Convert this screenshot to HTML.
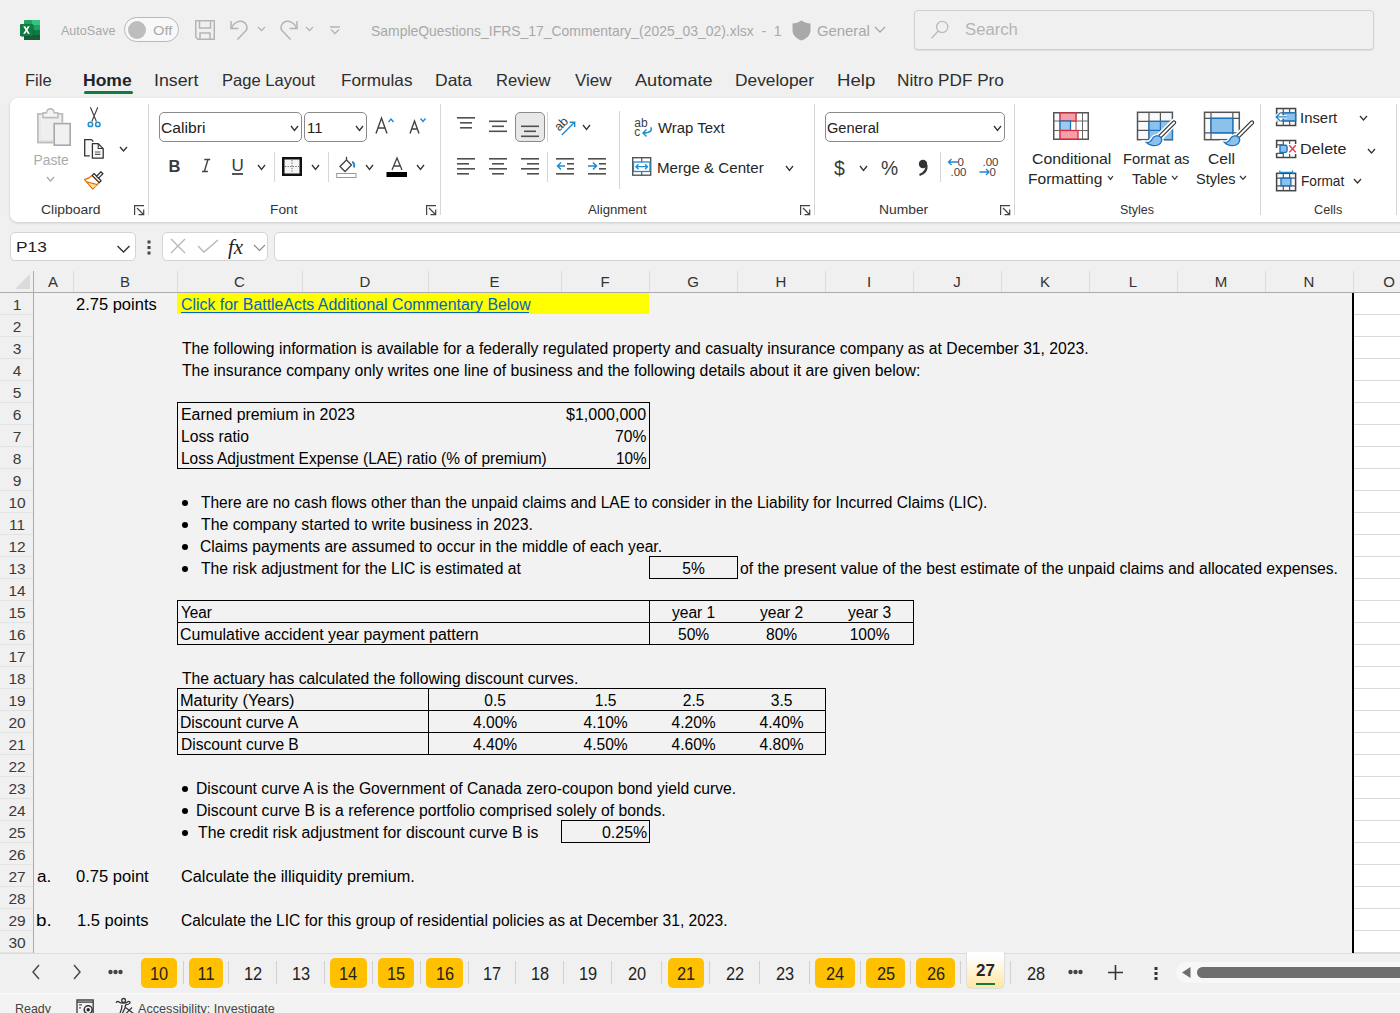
<!DOCTYPE html><html><head><meta charset="utf-8"><style>
html,body{margin:0;padding:0;}
body{width:1400px;height:1013px;overflow:hidden;position:relative;background:#F0F0F0;font-family:"Liberation Sans",sans-serif;}
.t{position:absolute;line-height:0;white-space:nowrap;}
.r{position:absolute;}
svg.r{overflow:visible}
</style></head><body>
<svg class="r" style="left:20px;top:20px" width="20" height="20" viewBox="0 0 20 20">
<rect x="4" y="0" width="16" height="20" rx="1" fill="#21A366"/>
<rect x="12" y="0" width="8" height="5" fill="#33C481"/>
<rect x="12" y="5" width="8" height="5" fill="#21A366"/>
<rect x="4" y="10" width="16" height="5" fill="#107C41"/>
<rect x="4" y="15" width="16" height="5" fill="#185C37"/>
<rect x="1" y="5" width="13" height="12" fill="#0A5A2E" opacity="0.5"/>
<rect x="0" y="4" width="13" height="12" rx="0.6" fill="#107C41"/>
<path d="M3.2 6.3 L5.5 10 L3.1 13.7 H5.2 L6.5 11.4 L7.8 13.7 H9.9 L7.5 10 L9.8 6.3 H7.8 L6.5 8.6 L5.2 6.3 Z" fill="#fff"/>
</svg>
<div class="t" style="left:61.00px;top:31.12px;font-size:13.5px;color:#A8A8A8;font-weight:normal;transform:scaleX(0.9298);transform-origin:0 0;">AutoSave</div>
<div class="r" style="left:124px;top:17px;width:55px;height:25px;border:1px solid #B8B8B8;border-radius:13px;background:#F8F8F8;box-sizing:border-box"></div>
<div class="r" style="left:128px;top:21px;width:18px;height:18px;background:#BDBDBD;border-radius:50%"></div>
<div class="t" style="left:152.51px;top:31.12px;font-size:13.5px;color:#A8A8A8;font-weight:normal;transform:scaleX(1.0875);transform-origin:0 0;">Off</div>
<svg class="r" style="left:195px;top:20px" width="20" height="20" viewBox="0 0 20 20"><path d="M0.75 0.75 H19.25 V19.25 H3 L0.75 17 Z" fill="none" stroke="#B4B4B4" stroke-width="1.5"/>
<path d="M4.5 0.75 V8 H15.5 V0.75" fill="none" stroke="#B4B4B4" stroke-width="1.5"/>
<path d="M5 19.25 V13 H15 V19.25" fill="none" stroke="#B4B4B4" stroke-width="1.5"/></svg>
<svg class="r" style="left:230px;top:20px" width="20" height="20" viewBox="0 0 20 20"><path d="M1 1 V8.5 H8.5" fill="none" stroke="#B4B4B4" stroke-width="1.5"/>
<path d="M1.5 8 C4 2 9 0.5 12.5 1.5 C17 3 18 8 16 10.5 L7.5 19.5" fill="none" stroke="#B4B4B4" stroke-width="1.5"/></svg>
<svg class="r" style="left:257px;top:26px" width="9" height="6" viewBox="0 0 9 6"><path d="M1 1 L4.5 4.5 L8 1" fill="none" stroke="#B4B4B4" stroke-width="1.3"/></svg>
<svg class="r" style="left:278px;top:20px" width="20" height="20" viewBox="0 0 20 20"><path d="M19 1 V8.5 H11.5" fill="none" stroke="#B4B4B4" stroke-width="1.5"/>
<path d="M18.5 8 C16 2 11 0.5 7.5 1.5 C3 3 2 8 4 10.5 L12.5 19.5" fill="none" stroke="#B4B4B4" stroke-width="1.5"/></svg>
<svg class="r" style="left:305px;top:26px" width="9" height="6" viewBox="0 0 9 6"><path d="M1 1 L4.5 4.5 L8 1" fill="none" stroke="#B4B4B4" stroke-width="1.3"/></svg>
<svg class="r" style="left:330px;top:26px" width="10" height="9" viewBox="0 0 10 9"><path d="M0 1 H10 M1 3.5 L5 7.5 L9 3.5" fill="none" stroke="#B4B4B4" stroke-width="1.3"/></svg>
<div class="t" style="left:370.60px;top:31.18px;font-size:13.9px;color:#A8A8A8;font-weight:normal;transform:scaleX(1.0034);transform-origin:0 0;">SampleQuestions_IFRS_17_Commentary_(2025_03_02).xlsx&nbsp;&nbsp;-&nbsp;&nbsp;1</div>
<svg class="r" style="left:792px;top:20px" width="19" height="21" viewBox="0 0 19 21"><path d="M9.5 0.5 C6.5 2.5 3.5 3.5 0.5 3.5 V10 C0.5 15 4 18.5 9.5 20.5 C15 18.5 18.5 15 18.5 10 V3.5 C15.5 3.5 12.5 2.5 9.5 0.5 Z" fill="#A9A9A9"/></svg>
<div class="t" style="left:816.53px;top:31.18px;font-size:13.9px;color:#A8A8A8;font-weight:normal;transform:scaleX(1.0702);transform-origin:0 0;">General</div>
<svg class="r" style="left:874px;top:26px" width="12" height="7" viewBox="0 0 12 7"><path d="M1 1 L6 6 L11 1" fill="none" stroke="#A8A8A8" stroke-width="1.3"/></svg>
<div class="r" style="left:914px;top:10px;width:460px;height:40px;border:1px solid #CFCFCF;border-radius:4px;background:#F0F0F0;box-sizing:border-box;box-shadow:0 1px 1px rgba(0,0,0,0.08)"></div>
<svg class="r" style="left:930px;top:19px" width="20" height="21" viewBox="0 0 20 21"><circle cx="12.2" cy="8" r="5.6" fill="none" stroke="#BBBBBB" stroke-width="1.3"/><path d="M8.2 12 L1.6 19.2" stroke="#BBBBBB" stroke-width="1.4"/></svg>
<div class="t" style="left:965.16px;top:30.26px;font-size:16px;color:#B4B4B4;font-weight:normal;transform:scaleX(1.0437);transform-origin:0 0;">Search</div>
<div class="t" style="left:25.00px;top:80.28px;font-size:16.5px;color:#2E2E2E;font-weight:normal;transform:scaleX(1.0000);transform-origin:0 0;">File</div>
<div class="t" style="left:83.32px;top:80.35px;font-size:16.3px;color:#242424;font-weight:bold;transform:scaleX(1.0767);transform-origin:0 0;">Home</div>
<div class="t" style="left:153.92px;top:80.28px;font-size:16.5px;color:#2E2E2E;font-weight:normal;transform:scaleX(1.0769);transform-origin:0 0;">Insert</div>
<div class="t" style="left:222.49px;top:80.28px;font-size:16.5px;color:#2E2E2E;font-weight:normal;transform:scaleX(1.0055);transform-origin:0 0;">Page Layout</div>
<div class="t" style="left:341.36px;top:80.28px;font-size:16.5px;color:#2E2E2E;font-weight:normal;transform:scaleX(1.0394);transform-origin:0 0;">Formulas</div>
<div class="t" style="left:434.54px;top:80.28px;font-size:16.5px;color:#2E2E2E;font-weight:normal;transform:scaleX(1.0606);transform-origin:0 0;">Data</div>
<div class="t" style="left:495.99px;top:80.28px;font-size:16.5px;color:#2E2E2E;font-weight:normal;transform:scaleX(1.0077);transform-origin:0 0;">Review</div>
<div class="t" style="left:575.00px;top:80.28px;font-size:16.5px;color:#2E2E2E;font-weight:normal;transform:scaleX(1.0286);transform-origin:0 0;">View</div>
<div class="t" style="left:635.00px;top:80.28px;font-size:16.5px;color:#2E2E2E;font-weight:normal;transform:scaleX(1.0986);transform-origin:0 0;">Automate</div>
<div class="t" style="left:734.95px;top:80.28px;font-size:16.5px;color:#2E2E2E;font-weight:normal;transform:scaleX(1.0507);transform-origin:0 0;">Developer</div>
<div class="t" style="left:836.87px;top:80.28px;font-size:16.5px;color:#2E2E2E;font-weight:normal;transform:scaleX(1.1290);transform-origin:0 0;">Help</div>
<div class="t" style="left:897.26px;top:80.28px;font-size:16.5px;color:#2E2E2E;font-weight:normal;transform:scaleX(1.0410);transform-origin:0 0;">Nitro PDF Pro</div>
<div class="r" style="left:84px;top:91px;width:49px;height:3px;background:#107C41;border-radius:2px"></div>
<div class="r" style="left:10px;top:98px;width:1400px;height:124px;background:#fff;border-radius:8px;box-shadow:0 1px 3px rgba(0,0,0,0.16)"></div>
<svg class="r" style="left:30px;top:100px" width="80" height="62" viewBox="0 0 80 62">
<path d="M7.9 13.8 H12.3 M20.6 13.8 H32.3 V22.5 M23.2 42.4 H7.9 V13.8" fill="#EFEFEF" stroke="#BDBDBD" stroke-width="1.7"/>
<rect x="7.9" y="13.8" width="24.4" height="28.6" fill="#EFEFEF" stroke="none"/>
<path d="M32.3 22.5 V13.8 H7.9 V42.4 H23.2" fill="none" stroke="#BDBDBD" stroke-width="1.7"/>
<path d="M10 16 V40.5 H23" fill="none" stroke="#E4E4E4" stroke-width="1"/>
<path d="M12.9 17.6 V12.9 H16.6 C16.8 7.5 23.8 7.5 24.0 12.9 H28.0 V17.6 Z" fill="#F4F4F4" stroke="#BDBDBD" stroke-width="1.6" stroke-linejoin="round"/>
<rect x="24.2" y="23.6" width="16.0" height="21.6" fill="#F1F1F1" stroke="#A9A9A9" stroke-width="1.6"/>
<path d="M60.4 7.2 L66.4 21.5 M67.8 7.2 L61.8 21.5" stroke="#424242" stroke-width="1.15" fill="none"/>
<circle cx="60.4" cy="24.4" r="2.2" fill="#fff" stroke="#1E8BCD" stroke-width="1.5"/><circle cx="67.8" cy="24.4" r="2.2" fill="#fff" stroke="#1E8BCD" stroke-width="1.5"/>
<path d="M59.8 55.8 H54.7 V39.6 H61.5 L63.4 41.6" fill="#FAFAFA" stroke="#333" stroke-width="1.3"/>
<path d="M62.4 43.7 H68.3 L73.2 48.6 V58.2 H62.4 Z" fill="#FAFAFA" stroke="#333" stroke-width="1.3" stroke-linejoin="round"/>
<path d="M68.2 43.9 V48.5 H73" fill="none" stroke="#333" stroke-width="1.1"/>
<path d="M65 52 H70.4 M65 54.4 H70.4" stroke="#555" stroke-width="1.1"/>
</svg>
<div class="t" style="left:33.50px;top:160.82px;font-size:13.8px;color:#ABABAB;font-weight:normal;transform:scaleX(1.0000);transform-origin:0 0;">Paste</div>
<svg class="r" style="left:46px;top:176px" width="9" height="6" viewBox="0 0 9 6"><path d="M1 1 L4.5 5 L8 1" fill="none" stroke="#ABABAB" stroke-width="1.3"/></svg>
<svg class="r" style="left:119px;top:146px" width="9" height="6" viewBox="0 0 9 6"><path d="M1 1 L4.5 5 L8 1" fill="none" stroke="#333" stroke-width="1.3"/></svg>
<svg class="r" style="left:80px;top:165px" width="30" height="30" viewBox="0 0 30 30"><path d="M12.2 10.6 Q8.8 13.6 4.6 14.6 L12.7 24 L19.2 17.6 Z" fill="#fff" stroke="#E3730D" stroke-width="1.3" stroke-linejoin="round"/>
<path d="M9 18.6 L16.8 20 L12.7 23.2 Z" fill="#F9DF8A"/>
<path d="M6.4 16.9 L17.4 19.6" stroke="#E3730D" stroke-width="1.2"/>
<path d="M12.2 10.4 L19.3 17.6 L21.1 15.75 L14.0 8.55 Z" fill="#fff" stroke="#333" stroke-width="1.25" stroke-linejoin="round"/>
<path d="M16.6 11.2 L18.5 13.1 L22.9 8.7 L21.0 6.8 Z" fill="#fff" stroke="#333" stroke-width="1.25" stroke-linejoin="round"/></svg>
<div class="t" style="left:41.34px;top:209.93px;font-size:13.2px;color:#333;font-weight:normal;transform:scaleX(1.0556);transform-origin:0 0;">Clipboard</div>
<svg class="r" style="left:133.5px;top:204.5px" width="11" height="11" viewBox="0 0 11 11"><path d="M0.6 10 V0.6 H10" fill="none" stroke="#424242" stroke-width="1.2"/><path d="M3 3 L9.5 9.5 M4.5 9.7 H9.7 V4.5" fill="none" stroke="#424242" stroke-width="1.2"/></svg>
<div class="r" style="left:148px;top:104px;width:1px;height:111px;background:#D6D6D6"></div>
<div class="r" style="left:159px;top:112px;width:143px;height:30px;border:1px solid #8A8A8A;border-radius:5px;box-sizing:border-box"></div>
<div class="t" style="left:160.98px;top:127.70px;font-size:15.3px;color:#222;font-weight:normal;transform:scaleX(1.0244);transform-origin:0 0;">Calibri</div>
<svg class="r" style="left:290px;top:125px" width="9" height="6.5" viewBox="0 0 9 6.5"><path d="M1 1 L4.5 5.5 L8 1" fill="none" stroke="#333" stroke-width="1.3"/></svg>
<div class="r" style="left:304px;top:112px;width:63px;height:30px;border:1px solid #8A8A8A;border-radius:5px;box-sizing:border-box"></div>
<div class="t" style="left:307.43px;top:127.70px;font-size:15.3px;color:#222;font-weight:normal;transform:scaleX(0.9692);transform-origin:0 0;">11</div>
<svg class="r" style="left:355px;top:125px" width="9" height="6.5" viewBox="0 0 9 6.5"><path d="M1 1 L4.5 5.5 L8 1" fill="none" stroke="#333" stroke-width="1.3"/></svg>
<svg class="r" style="left:375px;top:117px" width="20" height="17" viewBox="0 0 20 17"><path d="M1 16.5 L6.5 1 L12 16.5 M3 11 H10" fill="none" stroke="#424242" stroke-width="1.4"/><path d="M13.5 5 L16 2 L18.5 5" fill="none" stroke="#1E8BCD" stroke-width="1.4"/></svg>
<svg class="r" style="left:409px;top:117px" width="18" height="17" viewBox="0 0 18 17"><path d="M1 16.5 L5.5 4 L10 16.5 M2.6 12 H8.4" fill="none" stroke="#424242" stroke-width="1.4"/><path d="M11.5 1.5 L14 4.5 L16.5 1.5" fill="none" stroke="#1E8BCD" stroke-width="1.4"/></svg>
<div class="t" style="left:168.5px;top:166.28px;font-size:16.5px;color:#3A3A3A;font-weight:normal;"><b>B</b></div>
<svg class="r" style="left:200px;top:157px" width="14" height="17" viewBox="0 0 14 17"><path d="M4.3 2.6 H10.2 M2 14.6 H7.9 M7.9 2.6 L4.3 14.6" fill="none" stroke="#444" stroke-width="1.5"/></svg>
<div class="t" style="left:231.5px;top:166.11px;font-size:17px;color:#3A3A3A;font-weight:normal;">U</div>
<div class="r" style="left:232px;top:173px;width:11px;height:1.8px;background:#555"></div>
<svg class="r" style="left:257px;top:164px" width="9" height="6.5" viewBox="0 0 9 6.5"><path d="M1 1 L4.5 5.5 L8 1" fill="none" stroke="#333" stroke-width="1.3"/></svg>
<div class="r" style="left:274px;top:152px;width:1px;height:30px;background:#D6D6D6"></div>
<svg class="r" style="left:282px;top:157px" width="20" height="19" viewBox="0 0 20 19"><rect x="1.25" y="1.25" width="17.5" height="16.5" fill="#F5F5F5" stroke="#111" stroke-width="2.5"/>
<path d="M10 3 V16 M3 9.5 H17" stroke="#666" stroke-width="1" stroke-dasharray="1.3 1.3"/></svg>
<svg class="r" style="left:311px;top:164px" width="9" height="6.5" viewBox="0 0 9 6.5"><path d="M1 1 L4.5 5.5 L8 1" fill="none" stroke="#333" stroke-width="1.3"/></svg>
<div class="r" style="left:328px;top:152px;width:1px;height:30px;background:#D6D6D6"></div>
<svg class="r" style="left:336px;top:156px" width="21" height="22" viewBox="0 0 21 22"><path d="M4 10.5 L10.5 4 L15.5 9 L9 15.5 Z" fill="none" stroke="#424242" stroke-width="1.3"/>
<path d="M10.5 4 V0.8" stroke="#424242" stroke-width="1.3"/><path d="M16 6 C18 6.5 18.5 9 18 11.5" stroke="#1E8BCD" stroke-width="2" fill="none"/>
<rect x="0.7" y="17.5" width="19.3" height="4" fill="#fff" stroke="#9A9A9A" stroke-width="1"/></svg>
<svg class="r" style="left:365px;top:164px" width="9" height="6.5" viewBox="0 0 9 6.5"><path d="M1 1 L4.5 5.5 L8 1" fill="none" stroke="#333" stroke-width="1.3"/></svg>
<svg class="r" style="left:386px;top:157px" width="22" height="21" viewBox="0 0 22 21"><path d="M6 13 L11 1 L16 13 M7.8 9 H14.2" fill="none" stroke="#424242" stroke-width="1.3"/><rect x="0.5" y="15" width="20.5" height="5" fill="#000"/></svg>
<svg class="r" style="left:416px;top:164px" width="9" height="6.5" viewBox="0 0 9 6.5"><path d="M1 1 L4.5 5.5 L8 1" fill="none" stroke="#333" stroke-width="1.3"/></svg>
<div class="t" style="left:269.96px;top:209.93px;font-size:13.2px;color:#333;font-weight:normal;transform:scaleX(1.0417);transform-origin:0 0;">Font</div>
<svg class="r" style="left:426px;top:204.5px" width="11" height="11" viewBox="0 0 11 11"><path d="M0.6 10 V0.6 H10" fill="none" stroke="#424242" stroke-width="1.2"/><path d="M3 3 L9.5 9.5 M4.5 9.7 H9.7 V4.5" fill="none" stroke="#424242" stroke-width="1.2"/></svg>
<div class="r" style="left:440px;top:104px;width:1px;height:111px;background:#D6D6D6"></div>
<svg class="r" style="left:457px;top:110px" width="20" height="70" viewBox="0 0 20 70"><rect x="0" y="7" width="18" height="1.6" fill="#505050"/><rect x="3" y="12" width="12" height="1.6" fill="#505050"/><rect x="3" y="17" width="12" height="1.6" fill="#505050"/></svg>
<svg class="r" style="left:489px;top:110px" width="20" height="70" viewBox="0 0 20 70"><rect x="0" y="10.5" width="18" height="1.6" fill="#505050"/><rect x="3" y="15.5" width="12" height="1.6" fill="#505050"/><rect x="0" y="20.5" width="18" height="1.6" fill="#505050"/></svg>
<div class="r" style="left:515px;top:112px;width:30px;height:30px;background:#E8E8E8;border:1px solid #8A8A8A;border-radius:5px;box-sizing:border-box"></div>
<svg class="r" style="left:521px;top:110px" width="20" height="70" viewBox="0 0 20 70"><rect x="0" y="15.5" width="18" height="1.6" fill="#505050"/><rect x="3" y="20.5" width="12" height="1.6" fill="#505050"/><rect x="0" y="25.5" width="18" height="1.6" fill="#505050"/></svg>
<div class="r" style="left:547px;top:112px;width:1px;height:30px;background:#D6D6D6"></div>
<svg class="r" style="left:554px;top:116px" width="23" height="21" viewBox="0 0 23 21"><text x="0" y="0" transform="translate(5.2,15.8) rotate(-45)" font-family="Liberation Sans" font-size="12.5" fill="#424242">ab</text>
<path d="M7.8 19 L20.5 6.3 M15.6 6.2 H20.7 V11" fill="none" stroke="#1E8BCD" stroke-width="1.4"/></svg>
<svg class="r" style="left:582px;top:124px" width="9" height="6.5" viewBox="0 0 9 6.5"><path d="M1 1 L4.5 5.5 L8 1" fill="none" stroke="#333" stroke-width="1.3"/></svg>
<svg class="r" style="left:457px;top:110px" width="20" height="70" viewBox="0 0 20 70"><rect x="0" y="48" width="18" height="1.6" fill="#505050"/><rect x="0" y="53" width="12" height="1.6" fill="#505050"/><rect x="0" y="58" width="18" height="1.6" fill="#505050"/><rect x="0" y="63" width="12" height="1.6" fill="#505050"/></svg>
<svg class="r" style="left:489px;top:110px" width="20" height="70" viewBox="0 0 20 70"><rect x="0" y="48" width="18" height="1.6" fill="#505050"/><rect x="3" y="53" width="12" height="1.6" fill="#505050"/><rect x="0" y="58" width="18" height="1.6" fill="#505050"/><rect x="3" y="63" width="12" height="1.6" fill="#505050"/></svg>
<svg class="r" style="left:521px;top:110px" width="20" height="70" viewBox="0 0 20 70"><rect x="0" y="48" width="18" height="1.6" fill="#505050"/><rect x="6" y="53" width="12" height="1.6" fill="#505050"/><rect x="0" y="58" width="18" height="1.6" fill="#505050"/><rect x="6" y="63" width="12" height="1.6" fill="#505050"/></svg>
<div class="r" style="left:547px;top:152px;width:1px;height:30px;background:#D6D6D6"></div>
<svg class="r" style="left:556px;top:158px" width="19" height="18" viewBox="0 0 19 18"><rect x="0" y="0" width="18" height="1.6" fill="#505050"/><rect x="11" y="5" width="7" height="1.6" fill="#505050"/><rect x="11" y="10" width="7" height="1.6" fill="#505050"/><rect x="0" y="15" width="18" height="1.6" fill="#505050"/>
<path d="M9 8 H1.5 M5 4.5 L1.5 8 L5 11.5" fill="none" stroke="#1E8BCD" stroke-width="1.5"/></svg>
<svg class="r" style="left:588px;top:158px" width="19" height="18" viewBox="0 0 19 18"><rect x="0" y="0" width="18" height="1.6" fill="#505050"/><rect x="11" y="5" width="7" height="1.6" fill="#505050"/><rect x="11" y="10" width="7" height="1.6" fill="#505050"/><rect x="0" y="15" width="18" height="1.6" fill="#505050"/>
<path d="M0 8 H8.5 M5 4.5 L8.5 8 L5 11.5" fill="none" stroke="#1E8BCD" stroke-width="1.5"/></svg>
<div class="r" style="left:619px;top:111px;width:1px;height:78px;background:#D6D6D6"></div>
<svg class="r" style="left:634px;top:119px" width="19" height="19" viewBox="0 0 19 19"><text x="0.3" y="7.6" font-family="Liberation Sans" font-size="12" fill="#424242" transform="scale(1,1)">ab</text><text x="0.3" y="16.5" font-family="Liberation Sans" font-size="12" fill="#424242">c</text>
<path d="M16.8 8.2 C18.5 11.5 16 14 9.2 14 M12.5 10.6 L9 14 L12.5 17.4" fill="none" stroke="#1E8BCD" stroke-width="1.4"/></svg>
<div class="t" style="left:657.70px;top:128.11px;font-size:14.7px;color:#262626;font-weight:normal;transform:scaleX(1.0154);transform-origin:0 0;">Wrap Text</div>
<svg class="r" style="left:632px;top:157px" width="20" height="19" viewBox="0 0 20 19"><rect x="0.7" y="0.7" width="18" height="17.5" fill="none" stroke="#555" stroke-width="1.4"/>
<path d="M9.7 0.7 V18.2" stroke="#555" stroke-width="1.2"/>
<rect x="1.5" y="5" width="16.5" height="9.5" fill="#fff" stroke="#1E8BCD" stroke-width="1.3"/>
<path d="M4 9.7 H15.5 M6.5 7.2 L4 9.7 L6.5 12.2 M13 7.2 L15.5 9.7 L13 12.2" fill="none" stroke="#1E8BCD" stroke-width="1.3"/></svg>
<div class="t" style="left:656.67px;top:167.91px;font-size:14.7px;color:#262626;font-weight:normal;transform:scaleX(1.0294);transform-origin:0 0;">Merge &amp; Center</div>
<svg class="r" style="left:785px;top:164.5px" width="9" height="6.5" viewBox="0 0 9 6.5"><path d="M1 1 L4.5 5.5 L8 1" fill="none" stroke="#333" stroke-width="1.3"/></svg>
<div class="t" style="left:588.20px;top:210.23px;font-size:13.2px;color:#333;font-weight:normal;transform:scaleX(0.9983);transform-origin:0 0;">Alignment</div>
<svg class="r" style="left:800px;top:204.5px" width="11" height="11" viewBox="0 0 11 11"><path d="M0.6 10 V0.6 H10" fill="none" stroke="#424242" stroke-width="1.2"/><path d="M3 3 L9.5 9.5 M4.5 9.7 H9.7 V4.5" fill="none" stroke="#424242" stroke-width="1.2"/></svg>
<div class="r" style="left:814px;top:104px;width:1px;height:111px;background:#D6D6D6"></div>
<div class="r" style="left:825px;top:112px;width:180px;height:30px;border:1px solid #8A8A8A;border-radius:5px;box-sizing:border-box"></div>
<div class="t" style="left:827.34px;top:127.50px;font-size:15.3px;color:#222;font-weight:normal;transform:scaleX(0.9558);transform-origin:0 0;">General</div>
<svg class="r" style="left:993px;top:124.5px" width="9" height="6.5" viewBox="0 0 9 6.5"><path d="M1 1 L4.5 5.5 L8 1" fill="none" stroke="#333" stroke-width="1.3"/></svg>
<div class="t" style="left:834px;top:168.24px;font-size:19.5px;color:#3A3A3A;font-weight:normal;">$</div>
<svg class="r" style="left:859px;top:164.5px" width="9" height="6.5" viewBox="0 0 9 6.5"><path d="M1 1 L4.5 5.5 L8 1" fill="none" stroke="#333" stroke-width="1.3"/></svg>
<div class="t" style="left:880.5px;top:168.22px;font-size:21px;color:#3A3A3A;font-weight:normal;transform:scaleX(0.92);transform-origin:0 0">%</div>
<svg class="r" style="left:918px;top:159px" width="11" height="17" viewBox="0 0 11 17"><circle cx="5" cy="5" r="4.2" fill="#333"/><path d="M8.5 6 C9 11 6 14.5 1.5 16" stroke="#333" stroke-width="2.2" fill="none"/></svg>
<div class="r" style="left:940px;top:152px;width:1px;height:30px;background:#D6D6D6"></div>
<svg class="r" style="left:947px;top:157px" width="21" height="20" viewBox="0 0 21 20"><text x="10.5" y="9" font-family="Liberation Sans" font-size="11.5" fill="#424242">0</text><text x="3.5" y="19" font-family="Liberation Sans" font-size="11.5" fill="#424242">.00</text>
<path d="M11 5 H1.5 M4.5 2 L1.5 5 L4.5 8" fill="none" stroke="#1E8BCD" stroke-width="1.3"/></svg>
<svg class="r" style="left:979px;top:157px" width="21" height="20" viewBox="0 0 21 20"><text x="3.5" y="9" font-family="Liberation Sans" font-size="11.5" fill="#424242">.00</text><text x="10.5" y="19" font-family="Liberation Sans" font-size="11.5" fill="#424242">0</text>
<path d="M0.5 15 H10 M7 12 L10 15 L7 18" fill="none" stroke="#1E8BCD" stroke-width="1.3"/></svg>
<div class="t" style="left:879.45px;top:210.03px;font-size:13.2px;color:#333;font-weight:normal;transform:scaleX(1.0489);transform-origin:0 0;">Number</div>
<svg class="r" style="left:999.5px;top:204.5px" width="11" height="11" viewBox="0 0 11 11"><path d="M0.6 10 V0.6 H10" fill="none" stroke="#424242" stroke-width="1.2"/><path d="M3 3 L9.5 9.5 M4.5 9.7 H9.7 V4.5" fill="none" stroke="#424242" stroke-width="1.2"/></svg>
<div class="r" style="left:1014px;top:104px;width:1px;height:111px;background:#D6D6D6"></div>
<svg class="r" style="left:1053px;top:112px" width="36" height="28" viewBox="0 0 36 28"><rect x="0.75" y="0.75" width="34.5" height="26.5" fill="none" stroke="#555" stroke-width="1.5"/><path d="M7 0.75 V27.25" stroke="#666" stroke-width="1"/><path d="M23 0.75 V27.25" stroke="#666" stroke-width="1"/><path d="M29.5 0.75 V27.25" stroke="#666" stroke-width="1"/><path d="M0.75 9 H35.25" stroke="#666" stroke-width="1"/><path d="M0.75 18.5 H35.25" stroke="#666" stroke-width="1"/><rect x="7" y="1" width="16" height="8" fill="#F4A0A8" stroke="#E02B3C" stroke-width="1.3"/><rect x="7" y="9" width="10.5" height="9.5" fill="#9CCBEF" stroke="#1E73BE" stroke-width="1.3"/><rect x="7" y="18.5" width="18" height="8.5" fill="#F4A0A8" stroke="#E02B3C" stroke-width="1.3"/></svg>
<div class="t" style="left:1032.34px;top:158.80px;font-size:15px;color:#262626;font-weight:normal;transform:scaleX(1.0569);transform-origin:0 0;">Conditional</div>
<div class="t" style="left:1027.56px;top:178.80px;font-size:15px;color:#262626;font-weight:normal;transform:scaleX(1.0377);transform-origin:0 0;">Formatting</div>
<svg class="r" style="left:1107.3px;top:175px" width="7" height="5.4" viewBox="0 0 7 5.4"><path d="M1 1 L3.5 4.4 L6 1" fill="none" stroke="#333" stroke-width="1.2"/></svg>
<svg class="r" style="left:1130px;top:105px" width="120" height="45" viewBox="0 0 120 45">
<rect x="7.5" y="7.3" width="34.9" height="27.4" fill="#FAFAFA" stroke="#555" stroke-width="1.5"/>
<path d="M19 7.3 V34.7 M30.4 7.3 V34.7 M7.5 16.3 H42.4 M7.5 25.3 H42.4" stroke="#555" stroke-width="1.2"/>
<rect x="19" y="16.3" width="23.4" height="18.4" fill="#8CC1EC"/>
<path d="M19 16.3 H42.4 V34.7 H19 Z M30.4 16.3 V34.7 M19 25.3 H42.4" fill="none" stroke="#1E73BE" stroke-width="1.3"/>
<path d="M30.5 31 L44 17.5" stroke="#fff" stroke-width="7.5" stroke-linecap="round"/>
<path d="M16.5 37.5 C19.5 37.8 21 36.5 22.5 33.5 C24 30.5 28.5 30 30.5 32 C32.5 34 32 38.5 28 40 C24.5 41.5 19.5 40.5 16.5 37.5 Z" fill="#fff" stroke="#fff" stroke-width="4"/>
<path d="M30.5 31 L44 17.5" stroke="#333" stroke-width="4.4" stroke-linecap="round"/>
<path d="M30.5 31 L44 17.5" stroke="#fff" stroke-width="2" stroke-linecap="round"/>
<path d="M16.5 37.5 C19.5 37.8 21 36.5 22.5 33.5 C24 30.5 28.5 30 30.5 32 C32.5 34 32 38.5 28 40 C24.5 41.5 19.5 40.5 16.5 37.5 Z" fill="#8CC1EC" stroke="#1E73BE" stroke-width="1.3"/>
<rect x="74.5" y="7.3" width="34.8" height="27.4" fill="#FAFAFA" stroke="#555" stroke-width="1.5"/>
<path d="M81 7.3 V34.7 M102.8 7.3 V34.7 M74.5 13.3 H109.3 M74.5 27.8 H109.3" stroke="#555" stroke-width="1.2"/>
<rect x="81" y="13.3" width="21.8" height="14.5" fill="#8CC1EC" stroke="#1E73BE" stroke-width="1.4"/>
<path d="M108.5 31 L122 17.5" stroke="#fff" stroke-width="7.5" stroke-linecap="round"/>
<path d="M94.5 37.5 C97.5 37.8 99 36.5 100.5 33.5 C102 30.5 106.5 30 108.5 32 C110.5 34 110 38.5 106 40 C102.5 41.5 97.5 40.5 94.5 37.5 Z" fill="#fff" stroke="#fff" stroke-width="4"/>
<path d="M108.5 31 L122 17.5" stroke="#333" stroke-width="4.4" stroke-linecap="round"/>
<path d="M108.5 31 L122 17.5" stroke="#fff" stroke-width="2" stroke-linecap="round"/>
<path d="M94.5 37.5 C97.5 37.8 99 36.5 100.5 33.5 C102 30.5 106.5 30 108.5 32 C110.5 34 110 38.5 106 40 C102.5 41.5 97.5 40.5 94.5 37.5 Z" fill="#8CC1EC" stroke="#1E73BE" stroke-width="1.3"/>
</svg>
<div class="t" style="left:1122.72px;top:158.80px;font-size:15px;color:#262626;font-weight:normal;transform:scaleX(0.9846);transform-origin:0 0;">Format as</div>
<div class="t" style="left:1132.30px;top:178.80px;font-size:15px;color:#262626;font-weight:normal;transform:scaleX(0.9824);transform-origin:0 0;">Table</div>
<svg class="r" style="left:1170.7px;top:175px" width="7.5" height="5.4" viewBox="0 0 7.5 5.4"><path d="M1 1 L3.75 4.4 L6.5 1" fill="none" stroke="#333" stroke-width="1.2"/></svg>
<div class="t" style="left:1208.36px;top:158.80px;font-size:15px;color:#262626;font-weight:normal;transform:scaleX(1.0435);transform-origin:0 0;">Cell</div>
<div class="t" style="left:1195.63px;top:178.80px;font-size:15px;color:#262626;font-weight:normal;transform:scaleX(0.9684);transform-origin:0 0;">Styles</div>
<svg class="r" style="left:1238.5px;top:175px" width="8" height="5.4" viewBox="0 0 8 5.4"><path d="M1 1 L4.0 4.4 L7 1" fill="none" stroke="#333" stroke-width="1.2"/></svg>
<div class="t" style="left:1119.56px;top:210.23px;font-size:13.2px;color:#333;font-weight:normal;transform:scaleX(0.9441);transform-origin:0 0;">Styles</div>
<div class="r" style="left:1260px;top:104px;width:1px;height:111px;background:#D6D6D6"></div>
<svg class="r" style="left:1270px;top:104px" width="30" height="90" viewBox="0 0 30 90">
<path d="M6.6 12 V4.6 H25.6 V21.6 H6.6 V18" fill="#FAFAFA" stroke="#444" stroke-width="1.5"/>
<path d="M13.3 4.6 V21.6 M19.6 4.6 V21.6 M6.6 8.9 H25.6 M6.6 16.9 H25.6" stroke="#555" stroke-width="1.2"/>
<rect x="13.3" y="8.9" width="12.3" height="8" fill="#8CC1EC" stroke="#1E73BE" stroke-width="1.4"/>
<path d="M6 12.9 H17 M10.2 8.7 L6 12.9 L10.2 17.1" fill="none" stroke="#fff" stroke-width="3.2"/>
<path d="M6.2 12.9 H17 M10.2 8.9 L6.2 12.9 L10.2 16.9" fill="none" stroke="#1E8BCD" stroke-width="1.4"/>
<path d="M6.6 44 V36.4 H25.6 V40 M25.6 50 V53.6 H6.6 V49" fill="none" stroke="#444" stroke-width="1.5"/>
<path d="M13.3 36.4 V53.6 M19.6 36.4 V40 M19.6 50 V53.6 M6.6 40.9 H13.3 M6.6 49.4 H13.3" stroke="#555" stroke-width="1.2"/>
<path d="M10 41.3 H15.8 C17.6 41.3 17.6 48.4 15.8 48.4 H10 Z" fill="#8CC1EC" stroke="#1E73BE" stroke-width="1.4"/>
<path d="M19.3 41.3 L25.8 48.4 M25.8 41.3 L19.3 48.4" stroke="#E8323F" stroke-width="1.4"/>
<rect x="6.6" y="69.3" width="19" height="17.4" fill="#FAFAFA" stroke="#444" stroke-width="1.5"/>
<path d="M13.3 69.3 V86.7 M19.6 69.3 V86.7 M6.6 74.2 H25.6 M6.6 81.8 H25.6" stroke="#555" stroke-width="1.2"/>
<rect x="11" y="74.2" width="9.9" height="7.6" fill="#8CC1EC" stroke="#1E73BE" stroke-width="1.4"/>
<path d="M9.8 68.4 H22.6 M9.8 66.6 V70.2 M22.6 66.6 V70.2" stroke="#1E8BCD" stroke-width="1.3"/>
</svg>
<div class="t" style="left:1300.49px;top:117.67px;font-size:14.8px;color:#262626;font-weight:normal;transform:scaleX(1.0057);transform-origin:0 0;">Insert</div>
<svg class="r" style="left:1359px;top:115px" width="9" height="6" viewBox="0 0 9 6"><path d="M1 1 L4.5 5 L8 1" fill="none" stroke="#333" stroke-width="1.3"/></svg>
<div class="t" style="left:1300.41px;top:149.47px;font-size:14.8px;color:#262626;font-weight:normal;transform:scaleX(1.0875);transform-origin:0 0;">Delete</div>
<svg class="r" style="left:1367px;top:147.5px" width="9" height="6" viewBox="0 0 9 6"><path d="M1 1 L4.5 5 L8 1" fill="none" stroke="#333" stroke-width="1.3"/></svg>
<div class="t" style="left:1300.58px;top:181.17px;font-size:14.8px;color:#262626;font-weight:normal;transform:scaleX(0.9222);transform-origin:0 0;">Format</div>
<svg class="r" style="left:1352.5px;top:178px" width="9" height="6" viewBox="0 0 9 6"><path d="M1 1 L4.5 5 L8 1" fill="none" stroke="#333" stroke-width="1.3"/></svg>
<div class="t" style="left:1313.74px;top:210.23px;font-size:13.2px;color:#333;font-weight:normal;transform:scaleX(0.9630);transform-origin:0 0;">Cells</div>
<div class="r" style="left:1396px;top:104px;width:1px;height:111px;background:#D6D6D6"></div>
<div class="r" style="left:10px;top:232px;width:126px;height:29px;background:#fff;border:1px solid #D4D4D4;border-radius:5px;box-sizing:border-box"></div>
<div class="t" style="left:15.98px;top:246.63px;font-size:15.5px;color:#222;font-weight:normal;transform:scaleX(1.1160);transform-origin:0 0;">P13</div>
<svg class="r" style="left:116px;top:244px" width="15" height="10" viewBox="0 0 15 10"><path d="M1.5 2 L7.5 8 L13.5 2" fill="none" stroke="#333" stroke-width="1.4"/></svg>
<svg class="r" style="left:147px;top:240px" width="5" height="15" viewBox="0 0 5 15"><rect x="0.5" y="0.5" width="3" height="3" fill="#444"/><rect x="0.5" y="6" width="3" height="3" fill="#444"/><rect x="0.5" y="11.5" width="3" height="3" fill="#444"/></svg>
<div class="r" style="left:162px;top:232px;width:106px;height:29px;background:#fff;border:1px solid #D4D4D4;border-radius:5px;box-sizing:border-box"></div>
<svg class="r" style="left:170px;top:238px" width="16" height="16" viewBox="0 0 16 16"><path d="M1 1 L15 15 M15 1 L1 15" stroke="#B5B5B5" stroke-width="1.3"/></svg>
<svg class="r" style="left:197px;top:239px" width="22" height="14" viewBox="0 0 22 14"><path d="M1 7 L7 13 L21 1" fill="none" stroke="#B5B5B5" stroke-width="1.3"/></svg>
<div class="t" style="left:228px;top:247.22px;font-size:21px;color:#222;font-weight:normal;font-family:'Liberation Serif',serif"><i>fx</i></div>
<svg class="r" style="left:253px;top:244px" width="14" height="8" viewBox="0 0 14 8"><path d="M1 1 L6.5 6.5 L12 1" fill="none" stroke="#888" stroke-width="1.1"/></svg>
<div class="r" style="left:274px;top:232px;width:1200px;height:29px;background:#fff;border:1px solid #D4D4D4;border-radius:5px;box-sizing:border-box"></div>
<div class="r" style="left:34px;top:293px;width:1319px;height:660px;background:#F2F2F2"></div>
<div class="r" style="left:1354px;top:293px;width:46px;height:660px;background:#fff"></div>
<div class="r" style="left:1354px;top:314px;width:46px;height:1px;background:#DADADA"></div>
<div class="r" style="left:1354px;top:336px;width:46px;height:1px;background:#DADADA"></div>
<div class="r" style="left:1354px;top:358px;width:46px;height:1px;background:#DADADA"></div>
<div class="r" style="left:1354px;top:380px;width:46px;height:1px;background:#DADADA"></div>
<div class="r" style="left:1354px;top:402px;width:46px;height:1px;background:#DADADA"></div>
<div class="r" style="left:1354px;top:424px;width:46px;height:1px;background:#DADADA"></div>
<div class="r" style="left:1354px;top:446px;width:46px;height:1px;background:#DADADA"></div>
<div class="r" style="left:1354px;top:468px;width:46px;height:1px;background:#DADADA"></div>
<div class="r" style="left:1354px;top:490px;width:46px;height:1px;background:#DADADA"></div>
<div class="r" style="left:1354px;top:512px;width:46px;height:1px;background:#DADADA"></div>
<div class="r" style="left:1354px;top:534px;width:46px;height:1px;background:#DADADA"></div>
<div class="r" style="left:1354px;top:556px;width:46px;height:1px;background:#DADADA"></div>
<div class="r" style="left:1354px;top:578px;width:46px;height:1px;background:#DADADA"></div>
<div class="r" style="left:1354px;top:600px;width:46px;height:1px;background:#DADADA"></div>
<div class="r" style="left:1354px;top:622px;width:46px;height:1px;background:#DADADA"></div>
<div class="r" style="left:1354px;top:644px;width:46px;height:1px;background:#DADADA"></div>
<div class="r" style="left:1354px;top:666px;width:46px;height:1px;background:#DADADA"></div>
<div class="r" style="left:1354px;top:688px;width:46px;height:1px;background:#DADADA"></div>
<div class="r" style="left:1354px;top:710px;width:46px;height:1px;background:#DADADA"></div>
<div class="r" style="left:1354px;top:732px;width:46px;height:1px;background:#DADADA"></div>
<div class="r" style="left:1354px;top:754px;width:46px;height:1px;background:#DADADA"></div>
<div class="r" style="left:1354px;top:776px;width:46px;height:1px;background:#DADADA"></div>
<div class="r" style="left:1354px;top:798px;width:46px;height:1px;background:#DADADA"></div>
<div class="r" style="left:1354px;top:820px;width:46px;height:1px;background:#DADADA"></div>
<div class="r" style="left:1354px;top:842px;width:46px;height:1px;background:#DADADA"></div>
<div class="r" style="left:1354px;top:864px;width:46px;height:1px;background:#DADADA"></div>
<div class="r" style="left:1354px;top:886px;width:46px;height:1px;background:#DADADA"></div>
<div class="r" style="left:1354px;top:908px;width:46px;height:1px;background:#DADADA"></div>
<div class="r" style="left:1354px;top:930px;width:46px;height:1px;background:#DADADA"></div>
<div class="r" style="left:1354px;top:952px;width:46px;height:1px;background:#DADADA"></div>
<div class="r" style="left:1352px;top:293px;width:2px;height:660px;background:#000"></div>
<div class="r" style="left:0px;top:292px;width:1400px;height:1px;background:#ABABAB"></div>
<div class="r" style="left:33px;top:271px;width:1px;height:682px;background:#ABABAB"></div>
<svg class="r" style="left:15px;top:274px" width="16" height="16" viewBox="0 0 16 16"><path d="M15 0 V15 H0 Z" fill="#DADADA"/></svg>
<div class="t" style="left:-147.0px;width:400px;text-align:center;top:281.80px;font-size:15px;color:#333;font-weight:normal;">A</div>
<div class="r" style="left:73px;top:271px;width:1px;height:21px;background:#DCDCDC"></div>
<div class="t" style="left:-75.0px;width:400px;text-align:center;top:281.80px;font-size:15px;color:#333;font-weight:normal;">B</div>
<div class="r" style="left:177px;top:271px;width:1px;height:21px;background:#DCDCDC"></div>
<div class="t" style="left:39.5px;width:400px;text-align:center;top:281.80px;font-size:15px;color:#333;font-weight:normal;">C</div>
<div class="r" style="left:302px;top:271px;width:1px;height:21px;background:#DCDCDC"></div>
<div class="t" style="left:165.0px;width:400px;text-align:center;top:281.80px;font-size:15px;color:#333;font-weight:normal;">D</div>
<div class="r" style="left:428px;top:271px;width:1px;height:21px;background:#DCDCDC"></div>
<div class="t" style="left:294.5px;width:400px;text-align:center;top:281.80px;font-size:15px;color:#333;font-weight:normal;">E</div>
<div class="r" style="left:561px;top:271px;width:1px;height:21px;background:#DCDCDC"></div>
<div class="t" style="left:405.0px;width:400px;text-align:center;top:281.80px;font-size:15px;color:#333;font-weight:normal;">F</div>
<div class="r" style="left:649px;top:271px;width:1px;height:21px;background:#DCDCDC"></div>
<div class="t" style="left:493.0px;width:400px;text-align:center;top:281.80px;font-size:15px;color:#333;font-weight:normal;">G</div>
<div class="r" style="left:737px;top:271px;width:1px;height:21px;background:#DCDCDC"></div>
<div class="t" style="left:581.0px;width:400px;text-align:center;top:281.80px;font-size:15px;color:#333;font-weight:normal;">H</div>
<div class="r" style="left:825px;top:271px;width:1px;height:21px;background:#DCDCDC"></div>
<div class="t" style="left:669.0px;width:400px;text-align:center;top:281.80px;font-size:15px;color:#333;font-weight:normal;">I</div>
<div class="r" style="left:913px;top:271px;width:1px;height:21px;background:#DCDCDC"></div>
<div class="t" style="left:757.0px;width:400px;text-align:center;top:281.80px;font-size:15px;color:#333;font-weight:normal;">J</div>
<div class="r" style="left:1001px;top:271px;width:1px;height:21px;background:#DCDCDC"></div>
<div class="t" style="left:845.0px;width:400px;text-align:center;top:281.80px;font-size:15px;color:#333;font-weight:normal;">K</div>
<div class="r" style="left:1089px;top:271px;width:1px;height:21px;background:#DCDCDC"></div>
<div class="t" style="left:933.0px;width:400px;text-align:center;top:281.80px;font-size:15px;color:#333;font-weight:normal;">L</div>
<div class="r" style="left:1177px;top:271px;width:1px;height:21px;background:#DCDCDC"></div>
<div class="t" style="left:1021.0px;width:400px;text-align:center;top:281.80px;font-size:15px;color:#333;font-weight:normal;">M</div>
<div class="r" style="left:1265px;top:271px;width:1px;height:21px;background:#DCDCDC"></div>
<div class="t" style="left:1109.0px;width:400px;text-align:center;top:281.80px;font-size:15px;color:#333;font-weight:normal;">N</div>
<div class="r" style="left:1353px;top:271px;width:1px;height:21px;background:#DCDCDC"></div>
<div class="t" style="left:1189px;width:400px;text-align:center;top:281.80px;font-size:15px;color:#333;font-weight:normal;">O</div>
<div class="r" style="left:0px;top:314px;width:33px;height:1px;background:#E2E2E2"></div>
<div class="t" style="left:-183px;width:400px;text-align:center;top:304.63px;font-size:15.5px;color:#3A3A3A;font-weight:normal;">1</div>
<div class="r" style="left:0px;top:336px;width:33px;height:1px;background:#E2E2E2"></div>
<div class="t" style="left:-183px;width:400px;text-align:center;top:326.63px;font-size:15.5px;color:#3A3A3A;font-weight:normal;">2</div>
<div class="r" style="left:0px;top:358px;width:33px;height:1px;background:#E2E2E2"></div>
<div class="t" style="left:-183px;width:400px;text-align:center;top:348.63px;font-size:15.5px;color:#3A3A3A;font-weight:normal;">3</div>
<div class="r" style="left:0px;top:380px;width:33px;height:1px;background:#E2E2E2"></div>
<div class="t" style="left:-183px;width:400px;text-align:center;top:370.63px;font-size:15.5px;color:#3A3A3A;font-weight:normal;">4</div>
<div class="r" style="left:0px;top:402px;width:33px;height:1px;background:#E2E2E2"></div>
<div class="t" style="left:-183px;width:400px;text-align:center;top:392.63px;font-size:15.5px;color:#3A3A3A;font-weight:normal;">5</div>
<div class="r" style="left:0px;top:424px;width:33px;height:1px;background:#E2E2E2"></div>
<div class="t" style="left:-183px;width:400px;text-align:center;top:414.63px;font-size:15.5px;color:#3A3A3A;font-weight:normal;">6</div>
<div class="r" style="left:0px;top:446px;width:33px;height:1px;background:#E2E2E2"></div>
<div class="t" style="left:-183px;width:400px;text-align:center;top:436.63px;font-size:15.5px;color:#3A3A3A;font-weight:normal;">7</div>
<div class="r" style="left:0px;top:468px;width:33px;height:1px;background:#E2E2E2"></div>
<div class="t" style="left:-183px;width:400px;text-align:center;top:458.63px;font-size:15.5px;color:#3A3A3A;font-weight:normal;">8</div>
<div class="r" style="left:0px;top:490px;width:33px;height:1px;background:#E2E2E2"></div>
<div class="t" style="left:-183px;width:400px;text-align:center;top:480.63px;font-size:15.5px;color:#3A3A3A;font-weight:normal;">9</div>
<div class="r" style="left:0px;top:512px;width:33px;height:1px;background:#E2E2E2"></div>
<div class="t" style="left:-183px;width:400px;text-align:center;top:502.63px;font-size:15.5px;color:#3A3A3A;font-weight:normal;">10</div>
<div class="r" style="left:0px;top:534px;width:33px;height:1px;background:#E2E2E2"></div>
<div class="t" style="left:-183px;width:400px;text-align:center;top:524.63px;font-size:15.5px;color:#3A3A3A;font-weight:normal;">11</div>
<div class="r" style="left:0px;top:556px;width:33px;height:1px;background:#E2E2E2"></div>
<div class="t" style="left:-183px;width:400px;text-align:center;top:546.63px;font-size:15.5px;color:#3A3A3A;font-weight:normal;">12</div>
<div class="r" style="left:0px;top:578px;width:33px;height:1px;background:#E2E2E2"></div>
<div class="t" style="left:-183px;width:400px;text-align:center;top:568.63px;font-size:15.5px;color:#3A3A3A;font-weight:normal;">13</div>
<div class="r" style="left:0px;top:600px;width:33px;height:1px;background:#E2E2E2"></div>
<div class="t" style="left:-183px;width:400px;text-align:center;top:590.63px;font-size:15.5px;color:#3A3A3A;font-weight:normal;">14</div>
<div class="r" style="left:0px;top:622px;width:33px;height:1px;background:#E2E2E2"></div>
<div class="t" style="left:-183px;width:400px;text-align:center;top:612.63px;font-size:15.5px;color:#3A3A3A;font-weight:normal;">15</div>
<div class="r" style="left:0px;top:644px;width:33px;height:1px;background:#E2E2E2"></div>
<div class="t" style="left:-183px;width:400px;text-align:center;top:634.63px;font-size:15.5px;color:#3A3A3A;font-weight:normal;">16</div>
<div class="r" style="left:0px;top:666px;width:33px;height:1px;background:#E2E2E2"></div>
<div class="t" style="left:-183px;width:400px;text-align:center;top:656.63px;font-size:15.5px;color:#3A3A3A;font-weight:normal;">17</div>
<div class="r" style="left:0px;top:688px;width:33px;height:1px;background:#E2E2E2"></div>
<div class="t" style="left:-183px;width:400px;text-align:center;top:678.63px;font-size:15.5px;color:#3A3A3A;font-weight:normal;">18</div>
<div class="r" style="left:0px;top:710px;width:33px;height:1px;background:#E2E2E2"></div>
<div class="t" style="left:-183px;width:400px;text-align:center;top:700.63px;font-size:15.5px;color:#3A3A3A;font-weight:normal;">19</div>
<div class="r" style="left:0px;top:732px;width:33px;height:1px;background:#E2E2E2"></div>
<div class="t" style="left:-183px;width:400px;text-align:center;top:722.63px;font-size:15.5px;color:#3A3A3A;font-weight:normal;">20</div>
<div class="r" style="left:0px;top:754px;width:33px;height:1px;background:#E2E2E2"></div>
<div class="t" style="left:-183px;width:400px;text-align:center;top:744.63px;font-size:15.5px;color:#3A3A3A;font-weight:normal;">21</div>
<div class="r" style="left:0px;top:776px;width:33px;height:1px;background:#E2E2E2"></div>
<div class="t" style="left:-183px;width:400px;text-align:center;top:766.63px;font-size:15.5px;color:#3A3A3A;font-weight:normal;">22</div>
<div class="r" style="left:0px;top:798px;width:33px;height:1px;background:#E2E2E2"></div>
<div class="t" style="left:-183px;width:400px;text-align:center;top:788.63px;font-size:15.5px;color:#3A3A3A;font-weight:normal;">23</div>
<div class="r" style="left:0px;top:820px;width:33px;height:1px;background:#E2E2E2"></div>
<div class="t" style="left:-183px;width:400px;text-align:center;top:810.63px;font-size:15.5px;color:#3A3A3A;font-weight:normal;">24</div>
<div class="r" style="left:0px;top:842px;width:33px;height:1px;background:#E2E2E2"></div>
<div class="t" style="left:-183px;width:400px;text-align:center;top:832.63px;font-size:15.5px;color:#3A3A3A;font-weight:normal;">25</div>
<div class="r" style="left:0px;top:864px;width:33px;height:1px;background:#E2E2E2"></div>
<div class="t" style="left:-183px;width:400px;text-align:center;top:854.63px;font-size:15.5px;color:#3A3A3A;font-weight:normal;">26</div>
<div class="r" style="left:0px;top:886px;width:33px;height:1px;background:#E2E2E2"></div>
<div class="t" style="left:-183px;width:400px;text-align:center;top:876.63px;font-size:15.5px;color:#3A3A3A;font-weight:normal;">27</div>
<div class="r" style="left:0px;top:908px;width:33px;height:1px;background:#E2E2E2"></div>
<div class="t" style="left:-183px;width:400px;text-align:center;top:898.63px;font-size:15.5px;color:#3A3A3A;font-weight:normal;">28</div>
<div class="r" style="left:0px;top:930px;width:33px;height:1px;background:#E2E2E2"></div>
<div class="t" style="left:-183px;width:400px;text-align:center;top:920.63px;font-size:15.5px;color:#3A3A3A;font-weight:normal;">29</div>
<div class="r" style="left:0px;top:952px;width:33px;height:1px;background:#E2E2E2"></div>
<div class="t" style="left:-183px;width:400px;text-align:center;top:942.63px;font-size:15.5px;color:#3A3A3A;font-weight:normal;">30</div>
<div class="t" style="left:76.04px;top:304.99px;font-size:15.6px;color:#000;font-weight:normal;transform:scaleX(1.0581);transform-origin:0 0;">2.75 points</div>
<div class="r" style="left:177px;top:293px;width:472px;height:21px;background:#FFFF00"></div>
<div class="t" style="left:180.58px;top:304.99px;font-size:15.6px;color:#0563C1;font-weight:normal;transform:scaleX(1.0188);transform-origin:0 0;">Click for BattleActs Additional Commentary Below</div>
<div class="r" style="left:181px;top:312px;width:348px;height:1px;background:#0563C1"></div>
<div class="t" style="left:181.50px;top:348.99px;font-size:15.6px;color:#000;font-weight:normal;transform:scaleX(1.0077);transform-origin:0 0;">The following information is available for a federally regulated property and casualty insurance company as at December 31, 2023.</div>
<div class="t" style="left:181.50px;top:370.99px;font-size:15.6px;color:#000;font-weight:normal;transform:scaleX(1.0104);transform-origin:0 0;">The insurance company only writes one line of business and the following details about it are given below:</div>
<div class="r" style="left:177px;top:402px;width:473px;height:1px;background:#000"></div>
<div class="r" style="left:177px;top:468px;width:473px;height:1px;background:#000"></div>
<div class="r" style="left:177px;top:402px;width:1px;height:67px;background:#000"></div>
<div class="r" style="left:649px;top:402px;width:1px;height:67px;background:#000"></div>
<div class="t" style="left:180.98px;top:414.99px;font-size:15.6px;color:#000;font-weight:normal;transform:scaleX(1.0185);transform-origin:0 0;">Earned premium in 2023</div>
<div class="t" style="left:566.40px;top:414.99px;font-size:15.6px;color:#000;font-weight:normal;transform:scaleX(1.0273);transform-origin:0 0;">$1,000,000</div>
<div class="t" style="left:180.99px;top:436.99px;font-size:15.6px;color:#000;font-weight:normal;transform:scaleX(1.0062);transform-origin:0 0;">Loss ratio</div>
<div class="t" style="left:615.40px;top:436.99px;font-size:15.6px;color:#000;font-weight:normal;transform:scaleX(1.0034);transform-origin:0 0;">70%</div>
<div class="t" style="left:181.01px;top:458.99px;font-size:15.6px;color:#000;font-weight:normal;transform:scaleX(0.9904);transform-origin:0 0;">Loss Adjustment Expense (LAE) ratio (% of premium)</div>
<div class="t" style="left:616.02px;top:458.99px;font-size:15.6px;color:#000;font-weight:normal;transform:scaleX(0.9828);transform-origin:0 0;">10%</div>
<div class="r" style="left:182px;top:499.7px;width:6px;height:6px;background:#000;border-radius:50%"></div>
<div class="t" style="left:201.40px;top:502.99px;font-size:15.6px;color:#000;font-weight:normal;transform:scaleX(0.9959);transform-origin:0 0;">There are no cash flows other than the unpaid claims and LAE to consider in the Liability for Incurred Claims (LIC).</div>
<div class="r" style="left:182px;top:521.7px;width:6px;height:6px;background:#000;border-radius:50%"></div>
<div class="t" style="left:201.40px;top:524.99px;font-size:15.6px;color:#000;font-weight:normal;transform:scaleX(1.0157);transform-origin:0 0;">The company started to write business in 2023.</div>
<div class="r" style="left:182px;top:543.7px;width:6px;height:6px;background:#000;border-radius:50%"></div>
<div class="t" style="left:200.40px;top:546.99px;font-size:15.6px;color:#000;font-weight:normal;transform:scaleX(1.0039);transform-origin:0 0;">Claims payments are assumed to occur in the middle of each year.</div>
<div class="r" style="left:182px;top:565.7px;width:6px;height:6px;background:#000;border-radius:50%"></div>
<div class="t" style="left:201.40px;top:568.99px;font-size:15.6px;color:#000;font-weight:normal;transform:scaleX(1.0057);transform-origin:0 0;">The risk adjustment for the LIC is estimated at</div>
<div class="r" style="left:649px;top:556px;width:89px;height:1px;background:#000"></div>
<div class="r" style="left:649px;top:578px;width:89px;height:1px;background:#000"></div>
<div class="r" style="left:649px;top:556px;width:1px;height:23px;background:#000"></div>
<div class="r" style="left:737px;top:556px;width:1px;height:23px;background:#000"></div>
<div class="t" style="left:493.6px;width:400px;text-align:center;top:568.99px;font-size:15.6px;color:#000;font-weight:normal;">5%</div>
<div class="t" style="left:740.49px;top:568.99px;font-size:15.6px;color:#000;font-weight:normal;transform:scaleX(1.0085);transform-origin:0 0;">of the present value of the best estimate of the unpaid claims and allocated expenses.</div>
<div class="r" style="left:177px;top:600px;width:737px;height:1px;background:#000"></div>
<div class="r" style="left:177px;top:644px;width:737px;height:1px;background:#000"></div>
<div class="r" style="left:177px;top:600px;width:1px;height:45px;background:#000"></div>
<div class="r" style="left:913px;top:600px;width:1px;height:45px;background:#000"></div>
<div class="r" style="left:177px;top:622px;width:737px;height:1px;background:#000"></div>
<div class="r" style="left:649px;top:600px;width:1px;height:45px;background:#000"></div>
<div class="t" style="left:180.52px;top:612.99px;font-size:15.6px;color:#000;font-weight:normal;transform:scaleX(0.9828);transform-origin:0 0;">Year</div>
<div class="t" style="left:493.6px;width:400px;text-align:center;top:612.99px;font-size:15.6px;color:#000;font-weight:normal;">year 1</div>
<div class="t" style="left:581.6px;width:400px;text-align:center;top:612.99px;font-size:15.6px;color:#000;font-weight:normal;">year 2</div>
<div class="t" style="left:669.6px;width:400px;text-align:center;top:612.99px;font-size:15.6px;color:#000;font-weight:normal;">year 3</div>
<div class="t" style="left:180.48px;top:634.99px;font-size:15.6px;color:#000;font-weight:normal;transform:scaleX(1.0225);transform-origin:0 0;">Cumulative accident year payment pattern</div>
<div class="t" style="left:493.6px;width:400px;text-align:center;top:634.99px;font-size:15.6px;color:#000;font-weight:normal;">50%</div>
<div class="t" style="left:581.6px;width:400px;text-align:center;top:634.99px;font-size:15.6px;color:#000;font-weight:normal;">80%</div>
<div class="t" style="left:669.6px;width:400px;text-align:center;top:634.99px;font-size:15.6px;color:#000;font-weight:normal;">100%</div>
<div class="t" style="left:181.50px;top:678.99px;font-size:15.6px;color:#000;font-weight:normal;transform:scaleX(1.0048);transform-origin:0 0;">The actuary has calculated the following discount curves.</div>
<div class="r" style="left:177px;top:688px;width:649px;height:1px;background:#000"></div>
<div class="r" style="left:177px;top:754px;width:649px;height:1px;background:#000"></div>
<div class="r" style="left:177px;top:688px;width:1px;height:67px;background:#000"></div>
<div class="r" style="left:825px;top:688px;width:1px;height:67px;background:#000"></div>
<div class="r" style="left:177px;top:710px;width:649px;height:1px;background:#000"></div>
<div class="r" style="left:177px;top:732px;width:649px;height:1px;background:#000"></div>
<div class="r" style="left:428px;top:688px;width:1px;height:67px;background:#000"></div>
<div class="t" style="left:180.45px;top:700.99px;font-size:15.6px;color:#000;font-weight:normal;transform:scaleX(1.0458);transform-origin:0 0;">Maturity (Years)</div>
<div class="t" style="left:295.1px;width:400px;text-align:center;top:700.99px;font-size:15.6px;color:#000;font-weight:normal;">0.5</div>
<div class="t" style="left:405.6px;width:400px;text-align:center;top:700.99px;font-size:15.6px;color:#000;font-weight:normal;">1.5</div>
<div class="t" style="left:493.6px;width:400px;text-align:center;top:700.99px;font-size:15.6px;color:#000;font-weight:normal;">2.5</div>
<div class="t" style="left:581.6px;width:400px;text-align:center;top:700.99px;font-size:15.6px;color:#000;font-weight:normal;">3.5</div>
<div class="t" style="left:180.49px;top:722.99px;font-size:15.6px;color:#000;font-weight:normal;transform:scaleX(1.0096);transform-origin:0 0;">Discount curve A</div>
<div class="t" style="left:295.1px;width:400px;text-align:center;top:722.99px;font-size:15.6px;color:#000;font-weight:normal;">4.00%</div>
<div class="t" style="left:405.6px;width:400px;text-align:center;top:722.99px;font-size:15.6px;color:#000;font-weight:normal;">4.10%</div>
<div class="t" style="left:493.6px;width:400px;text-align:center;top:722.99px;font-size:15.6px;color:#000;font-weight:normal;">4.20%</div>
<div class="t" style="left:581.6px;width:400px;text-align:center;top:722.99px;font-size:15.6px;color:#000;font-weight:normal;">4.40%</div>
<div class="t" style="left:180.50px;top:744.99px;font-size:15.6px;color:#000;font-weight:normal;transform:scaleX(0.9991);transform-origin:0 0;">Discount curve B</div>
<div class="t" style="left:295.1px;width:400px;text-align:center;top:744.99px;font-size:15.6px;color:#000;font-weight:normal;">4.40%</div>
<div class="t" style="left:405.6px;width:400px;text-align:center;top:744.99px;font-size:15.6px;color:#000;font-weight:normal;">4.50%</div>
<div class="t" style="left:493.6px;width:400px;text-align:center;top:744.99px;font-size:15.6px;color:#000;font-weight:normal;">4.60%</div>
<div class="t" style="left:581.6px;width:400px;text-align:center;top:744.99px;font-size:15.6px;color:#000;font-weight:normal;">4.80%</div>
<div class="r" style="left:182px;top:785.7px;width:6px;height:6px;background:#000;border-radius:50%"></div>
<div class="t" style="left:196.49px;top:788.99px;font-size:15.6px;color:#000;font-weight:normal;transform:scaleX(1.0051);transform-origin:0 0;">Discount curve A is the Government of Canada zero-coupon bond yield curve.</div>
<div class="r" style="left:182px;top:807.7px;width:6px;height:6px;background:#000;border-radius:50%"></div>
<div class="t" style="left:196.49px;top:810.99px;font-size:15.6px;color:#000;font-weight:normal;transform:scaleX(1.0091);transform-origin:0 0;">Discount curve B is a reference portfolio comprised solely of bonds.</div>
<div class="r" style="left:182px;top:829.7px;width:6px;height:6px;background:#000;border-radius:50%"></div>
<div class="t" style="left:197.50px;top:832.99px;font-size:15.6px;color:#000;font-weight:normal;transform:scaleX(1.0122);transform-origin:0 0;">The credit risk adjustment for discount curve B is</div>
<div class="r" style="left:561px;top:820px;width:89px;height:1px;background:#000"></div>
<div class="r" style="left:561px;top:842px;width:89px;height:1px;background:#000"></div>
<div class="r" style="left:561px;top:820px;width:1px;height:23px;background:#000"></div>
<div class="r" style="left:649px;top:820px;width:1px;height:23px;background:#000"></div>
<div class="t" style="left:602.08px;top:832.99px;font-size:15.6px;color:#000;font-weight:normal;transform:scaleX(1.0214);transform-origin:0 0;">0.25%</div>
<div class="t" style="left:36.50px;top:876.99px;font-size:15.6px;color:#000;font-weight:normal;transform:scaleX(1.1000);transform-origin:0 0;">a.</div>
<div class="t" style="left:76.34px;top:876.99px;font-size:15.6px;color:#000;font-weight:normal;transform:scaleX(1.0612);transform-origin:0 0;">0.75 point</div>
<div class="t" style="left:180.65px;top:876.99px;font-size:15.6px;color:#000;font-weight:normal;transform:scaleX(1.0459);transform-origin:0 0;">Calculate the illiquidity premium.</div>
<div class="t" style="left:36.39px;top:920.99px;font-size:15.6px;color:#000;font-weight:normal;transform:scaleX(1.2100);transform-origin:0 0;">b.</div>
<div class="t" style="left:76.84px;top:920.99px;font-size:15.6px;color:#000;font-weight:normal;transform:scaleX(1.0569);transform-origin:0 0;">1.5 points</div>
<div class="t" style="left:180.70px;top:920.99px;font-size:15.6px;color:#000;font-weight:normal;transform:scaleX(0.9976);transform-origin:0 0;">Calculate the LIC for this group of residential policies as at December 31, 2023.</div>
<div class="r" style="left:0px;top:953px;width:1400px;height:1px;background:#DCDCDC"></div>
<svg class="r" style="left:31px;top:964px" width="10" height="16" viewBox="0 0 10 16"><path d="M8 1 L2 8 L8 15" fill="none" stroke="#444" stroke-width="1.4"/></svg>
<svg class="r" style="left:72px;top:964px" width="10" height="16" viewBox="0 0 10 16"><path d="M2 1 L8 8 L2 15" fill="none" stroke="#444" stroke-width="1.4"/></svg>
<svg class="r" style="left:108px;top:969px" width="15" height="6" viewBox="0 0 15 6"><circle cx="2.5" cy="3" r="2.2" fill="#444"/><circle cx="7.5" cy="3" r="2.2" fill="#444"/><circle cx="12.5" cy="3" r="2.2" fill="#444"/></svg>
<div class="r" style="left:183px;top:961px;width:1px;height:23px;background:#D0D0D0"></div>
<div class="r" style="left:228px;top:961px;width:1px;height:23px;background:#D0D0D0"></div>
<div class="r" style="left:276px;top:961px;width:1px;height:23px;background:#D0D0D0"></div>
<div class="r" style="left:324px;top:961px;width:1px;height:23px;background:#D0D0D0"></div>
<div class="r" style="left:372px;top:961px;width:1px;height:23px;background:#D0D0D0"></div>
<div class="r" style="left:420px;top:961px;width:1px;height:23px;background:#D0D0D0"></div>
<div class="r" style="left:468px;top:961px;width:1px;height:23px;background:#D0D0D0"></div>
<div class="r" style="left:515px;top:961px;width:1px;height:23px;background:#D0D0D0"></div>
<div class="r" style="left:563px;top:961px;width:1px;height:23px;background:#D0D0D0"></div>
<div class="r" style="left:611px;top:961px;width:1px;height:23px;background:#D0D0D0"></div>
<div class="r" style="left:661px;top:961px;width:1px;height:23px;background:#D0D0D0"></div>
<div class="r" style="left:709px;top:961px;width:1px;height:23px;background:#D0D0D0"></div>
<div class="r" style="left:759px;top:961px;width:1px;height:23px;background:#D0D0D0"></div>
<div class="r" style="left:809px;top:961px;width:1px;height:23px;background:#D0D0D0"></div>
<div class="r" style="left:860px;top:961px;width:1px;height:23px;background:#D0D0D0"></div>
<div class="r" style="left:910px;top:961px;width:1px;height:23px;background:#D0D0D0"></div>
<div class="r" style="left:960px;top:961px;width:1px;height:23px;background:#D0D0D0"></div>
<div class="r" style="left:1010px;top:961px;width:1px;height:23px;background:#D0D0D0"></div>
<div class="r" style="left:141px;top:958px;width:36px;height:30px;background:#FFC000;border-radius:5px"></div>
<div class="t" style="left:-40.625px;width:400px;text-align:center;top:974.43px;font-size:17.8px;color:#222;font-weight:normal;transform:scaleX(0.92)">10</div>
<div class="r" style="left:189px;top:958px;width:34px;height:30px;background:#FFC000;border-radius:5px"></div>
<div class="t" style="left:6.125px;width:400px;text-align:center;top:974.43px;font-size:17.8px;color:#222;font-weight:normal;transform:scaleX(0.92)">11</div>
<div class="t" style="left:52.5px;width:400px;text-align:center;top:974.43px;font-size:17.8px;color:#222;font-weight:normal;transform:scaleX(0.92)">12</div>
<div class="t" style="left:100.5px;width:400px;text-align:center;top:974.43px;font-size:17.8px;color:#222;font-weight:normal;transform:scaleX(0.92)">13</div>
<div class="r" style="left:330px;top:958px;width:37px;height:30px;background:#FFC000;border-radius:5px"></div>
<div class="t" style="left:148.375px;width:400px;text-align:center;top:974.43px;font-size:17.8px;color:#222;font-weight:normal;transform:scaleX(0.92)">14</div>
<div class="r" style="left:378px;top:958px;width:36px;height:30px;background:#FFC000;border-radius:5px"></div>
<div class="t" style="left:196.25px;width:400px;text-align:center;top:974.43px;font-size:17.8px;color:#222;font-weight:normal;transform:scaleX(0.92)">15</div>
<div class="r" style="left:426px;top:958px;width:37px;height:30px;background:#FFC000;border-radius:5px"></div>
<div class="t" style="left:244.625px;width:400px;text-align:center;top:974.43px;font-size:17.8px;color:#222;font-weight:normal;transform:scaleX(0.92)">16</div>
<div class="t" style="left:292.0px;width:400px;text-align:center;top:974.43px;font-size:17.8px;color:#222;font-weight:normal;transform:scaleX(0.92)">17</div>
<div class="t" style="left:339.5px;width:400px;text-align:center;top:974.43px;font-size:17.8px;color:#222;font-weight:normal;transform:scaleX(0.92)">18</div>
<div class="t" style="left:387.5px;width:400px;text-align:center;top:974.43px;font-size:17.8px;color:#222;font-weight:normal;transform:scaleX(0.92)">19</div>
<div class="t" style="left:436.5px;width:400px;text-align:center;top:974.43px;font-size:17.8px;color:#222;font-weight:normal;transform:scaleX(0.92)">20</div>
<div class="r" style="left:668px;top:958px;width:36px;height:30px;background:#FFC000;border-radius:5px"></div>
<div class="t" style="left:485.625px;width:400px;text-align:center;top:974.43px;font-size:17.8px;color:#222;font-weight:normal;transform:scaleX(0.92)">21</div>
<div class="t" style="left:534.5px;width:400px;text-align:center;top:974.43px;font-size:17.8px;color:#222;font-weight:normal;transform:scaleX(0.92)">22</div>
<div class="t" style="left:584.5px;width:400px;text-align:center;top:974.43px;font-size:17.8px;color:#222;font-weight:normal;transform:scaleX(0.92)">23</div>
<div class="r" style="left:815px;top:958px;width:40px;height:30px;background:#FFC000;border-radius:5px"></div>
<div class="t" style="left:635.0px;width:400px;text-align:center;top:974.43px;font-size:17.8px;color:#222;font-weight:normal;transform:scaleX(0.92)">24</div>
<div class="r" style="left:866px;top:958px;width:39px;height:30px;background:#FFC000;border-radius:5px"></div>
<div class="t" style="left:685.625px;width:400px;text-align:center;top:974.43px;font-size:17.8px;color:#222;font-weight:normal;transform:scaleX(0.92)">25</div>
<div class="r" style="left:916px;top:958px;width:39px;height:30px;background:#FFC000;border-radius:5px"></div>
<div class="t" style="left:735.625px;width:400px;text-align:center;top:974.43px;font-size:17.8px;color:#222;font-weight:normal;transform:scaleX(0.92)">26</div>
<div class="r" style="left:965.5px;top:952px;width:39.5px;height:36.5px;background:linear-gradient(#FFFFFF 10%, #FFE6A0);border-radius:0 0 6px 6px;border:1px solid #DEDEDE;border-top:none;box-sizing:border-box"></div>
<div class="t" style="left:785.5px;width:400px;text-align:center;top:970.61px;font-size:17px;color:#262626;font-weight:bold;">27</div>
<div class="r" style="left:976px;top:983px;width:19px;height:2px;background:#107C41"></div>
<div class="t" style="left:835.75px;width:400px;text-align:center;top:974.43px;font-size:17.8px;color:#222;font-weight:normal;transform:scaleX(0.92)">28</div>
<svg class="r" style="left:1068px;top:969px" width="15" height="6" viewBox="0 0 15 6"><circle cx="2.5" cy="3" r="2.2" fill="#444"/><circle cx="7.5" cy="3" r="2.2" fill="#444"/><circle cx="12.5" cy="3" r="2.2" fill="#444"/></svg>
<svg class="r" style="left:1108px;top:965px" width="15" height="15" viewBox="0 0 15 15"><path d="M7.5 0 V15 M0 7.5 H15" stroke="#333" stroke-width="1.6"/></svg>
<svg class="r" style="left:1154px;top:967px" width="4" height="13" viewBox="0 0 4 13"><rect x="0.5" y="0" width="3" height="3" fill="#333"/><rect x="0.5" y="5" width="3" height="3" fill="#333"/><rect x="0.5" y="10" width="3" height="3" fill="#333"/></svg>
<div class="r" style="left:1176px;top:962px;width:260px;height:21px;background:#F7F7F7;border-radius:10px"></div>
<svg class="r" style="left:1182px;top:967px" width="9" height="11" viewBox="0 0 9 11"><path d="M8.5 0 V11 L0 5.5 Z" fill="#6E6E6E"/></svg>
<div class="r" style="left:1197px;top:967px;width:260px;height:11px;background:#6E6E6E;border-radius:5.5px"></div>
<div class="r" style="left:0px;top:993px;width:1400px;height:20px;background:#F3F3F3"></div>
<div class="r" style="left:0px;top:993px;width:1400px;height:1px;background:#FAFAFA"></div>
<div class="t" style="left:14.64px;top:1008.50px;font-size:13px;color:#444;font-weight:normal;transform:scaleX(0.9556);transform-origin:0 0;">Ready</div>
<svg class="r" style="left:76px;top:999px" width="19" height="14" viewBox="0 0 19 14"><path d="M1 14 V1 H17.2 V14" fill="none" stroke="#444" stroke-width="1.4"/><path d="M1 3.1 H17.2" stroke="#444" stroke-width="1.4"/><path d="M3 5.8 H6 M3 8.8 H5" stroke="#555" stroke-width="1.2"/><circle cx="12.2" cy="10.8" r="4" fill="#F3F3F3" stroke="#333" stroke-width="1.5"/><circle cx="12.2" cy="10.8" r="1.7" fill="#222"/></svg>
<svg class="r" style="left:114px;top:997px" width="22" height="16" viewBox="0 0 22 16"><circle cx="9.6" cy="3.4" r="1.9" fill="none" stroke="#333" stroke-width="1.3"/><path d="M2.5 6 C2 4.5 4 4 5 5 C6.5 6.5 12 6.5 13.5 5 C14.5 4 16.5 4.5 16 6 C15 7.5 12.5 7.8 11.5 8 L11 11 L8.5 16 M8 8 C8 11 7.5 13 6 16" fill="none" stroke="#333" stroke-width="1.3"/><path d="M11.5 10.5 L19.5 16.5 M18 10.5 L12 16.5" stroke="#333" stroke-width="1.2"/></svg>
<div class="t" style="left:138.00px;top:1008.50px;font-size:13px;color:#444;font-weight:normal;transform:scaleX(0.9714);transform-origin:0 0;">Accessibility: Investigate</div>
</body></html>
